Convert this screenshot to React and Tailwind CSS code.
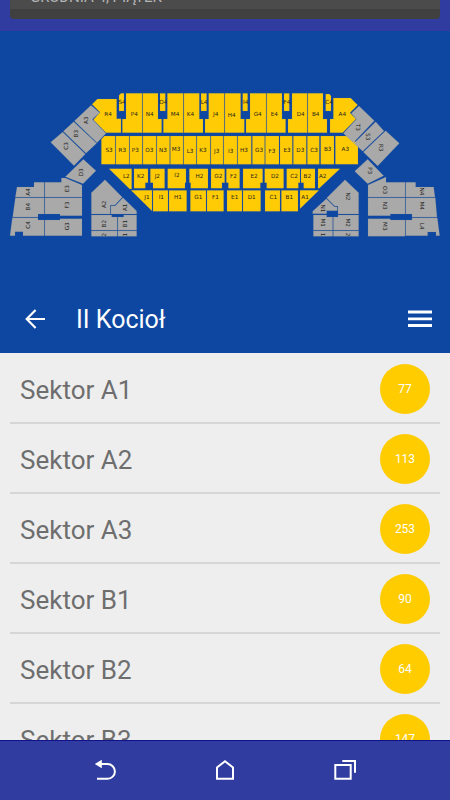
import React from 'react';

// Stand outlines, in map units. Each entry: label, label x, label y, outline
const yellowStands = [
  ['R4', 324, 102, '276,73 292,57 350,57 350,116 363,116 363,158 318,158 280,119 300,97'],
  ['S4', 366, 65, '357,46 363,40 372,40 372,93 357,93'],
  ['P4', 403, 102, '378,40 426,40 426,158 367,158 367,117 378,117'],
  ['N4', 449, 102, '428,40 474,40 474,117 485,117 485,158 428,158'],
  ['O4', 490, 65, '480,40 496,40 496,93 480,93'],
  ['M4', 525, 102, '502,40 550,40 550,158 490,158 490,117 502,117'],
  ['K4', 571, 102, '552,40 598,40 598,117 609,117 609,158 552,158'],
  ['L4', 612, 65, '603,40 620,40 620,93 603,93'],
  ['J4', 647, 102, '626,40 673,40 673,158 615,158 615,117 626,117'],
  ['H4', 695, 104, '675,40 722,40 722,117 733,117 733,158 675,158'],
  ['I4', 737, 66, '728,40 743,40 743,93 728,93'],
  ['G4', 773, 102, '750,40 798,40 798,158 738,158 738,117 750,117'],
  ['E4', 823, 102, '800,40 846,40 846,117 857,117 857,158 800,158'],
  ['F4', 861, 66, '852,40 868,40 868,93 852,93'],
  ['D4', 902, 102, '876,40 922,40 922,158 864,158 864,117 876,117'],
  ['B4', 947, 102, '924,40 969,40 969,117 981,117 981,158 924,158'],
  ['C4', 987, 65, '977,42 988,42 993,48 993,93 977,93'],
  ['A4', 1027, 101, '1000,54 1052,54 1073,75 1050,98 1068,117 1028,158 990,158 990,117 1000,117'],
  ['S3', 327, 210, '304,178 313,168 346,168 346,253 304,253'],
  ['R3', 367, 210, '348,168 387,168 387,253 348,253'],
  ['P3', 406, 210, '389,168 427,168 427,253 389,253'],
  ['O3', 448, 210, '429,168 469,168 469,253 429,253'],
  ['N3', 489, 210, '471,168 509,168 509,253 471,253'],
  ['M3', 528, 207, '511,168 549,168 549,253 511,253'],
  ['L3', 570, 212, '551,168 589,168 589,253 551,253'],
  ['K3', 609, 210, '591,168 631,168 631,253 591,253'],
  ['J3', 650, 212, '633,168 669,168 669,253 633,253'],
  ['I3', 692, 213, '671,168 711,168 711,253 671,253'],
  ['H3', 732, 210, '713,168 754,168 754,253 713,253'],
  ['G3', 777, 210, '757,168 794,168 794,253 757,253'],
  ['F3', 816, 212, '796,168 837,168 837,253 796,253'],
  ['E3', 861, 210, '840,168 877,168 877,253 840,253'],
  ['D3', 901, 210, '880,168 919,168 919,253 880,253'],
  ['C3', 942, 210, '922,168 958,168 958,253 922,253'],
  ['B3', 983, 208, '962,168 1002,168 1002,253 962,253'],
  ['A3', 1036, 208, '1006,168 1046,168 1074,193 1074,253 1006,253'],
  ['L2', 379, 287, '327,266 395,266 395,327 389,327'],
  ['K2', 422, 287, '402,266 444,266 444,308 436,308 436,325 402,325'],
  ['J2', 472, 287, '451,266 494,266 494,325 459,325 459,308 451,308'],
  ['I2', 531, 286, '503,266 558,266 558,308 555,308 555,325 503,325'],
  ['H2', 598, 288, '568,266 624,266 624,325 572,325 572,308 568,308'],
  ['G2', 655, 287, '633,266 674,266 674,308 666,308 666,325 633,325'],
  ['F2', 700, 287, '679,266 719,266 719,325 685,325 685,308 679,308'],
  ['E2', 762, 287, '729,266 788,266 788,308 781,308 781,325 729,325'],
  ['D2', 825, 287, '794,266 851,266 851,325 800,325 800,308 794,308'],
  ['C2', 882, 287, '860,266 900,266 900,308 895,308 895,325 860,325'],
  ['B2', 922, 287, '903,266 945,266 945,325 911,325 911,308 903,308'],
  ['A2', 968, 287, '954,266 1020,266 958,325 954,325'],
  ['J1', 441, 351, '393,331 456,331 456,393'],
  ['I1', 484, 350, '459,331 504,331 504,394 459,394'],
  ['H1', 534, 352, '507,331 560,331 560,394 507,394'],
  ['G1', 595, 352, '571,331 618,331 618,394 571,394'],
  ['F1', 646, 351, '621,331 671,331 671,394 621,394'],
  ['E1', 704, 352, '681,331 726,331 726,394 681,394'],
  ['D1', 755, 352, '729,331 782,331 782,394 729,394'],
  ['C1', 820, 352, '795,331 840,331 840,394 795,394'],
  ['B1', 868, 352, '844,331 894,331 894,394 844,394'],
  ['A1', 915, 352, '900,331 957,331 900,386'],
];

// Labels on the left side read upwards
const leftStands = [
  ['A3', 258, 121, '223,123 273,76 299,98 277,118 318,160 291,188'],
  ['B3', 228, 161, '190,154 221,125 290,190 258,220'],
  ['C3', 198, 198, '152,187 188,156 256,222 222,257'],
  ['D3', 242, 277, '250,238 288,272 249,311 196,290'],
  ['A4', 84, 336, '51,321 102,321 102,307 133,307 133,351 46,351'],
  ['E3', 201, 326, '135,307 184,307 184,294 196,294 246,315 246,351 135,351'],
  ['B4', 84, 380, '46,353 133,353 133,402 114,402 114,411 38,411'],
  ['F3', 201, 375, '135,353 246,353 246,407 180,407 180,402 135,402'],
  ['C4', 84, 435, '37,413 114,413 114,420 133,420 133,467 69,467 69,455 45,455 45,467 30,467'],
  ['G3', 201, 439, '135,420 180,420 180,416 246,416 246,467 135,467'],
  ['A2', 311, 373, '274,338 315,299 367,352 345,375 331,375 331,402 274,402'],
  ['A1', 375, 382, '369,353 410,393 410,402 333,402 333,377 346,377'],
  ['B2', 311, 431, '274,405 335,405 335,411 352,411 352,451 274,451'],
  ['B1', 375, 431, '354,411 371,411 371,405 410,405 410,451 354,451'],
  ['2', 311, 464, '274,453 352,453 352,469 274,469'],
  ['1', 375, 464, '354,453 410,453 410,469 354,469'],
];

// Labels on the right side read downwards
const rightStands = [
  ['T3', 1075, 142, '1077,78 1123,122 1060,188 1030,160 1069,118 1054,100'],
  ['S3', 1104, 170, '1127,125 1152,153 1088,214 1062,190'],
  ['R3', 1144, 203, '1157,152 1198,190 1133,258 1090,216'],
  ['P3', 1109, 272, '1103,238 1151,287 1103,311 1064,274'],
  ['O3', 1155, 330, '1104,315 1158,291 1158,307 1215,307 1215,351 1104,351'],
  ['N4', 1265, 334, '1217,307 1247,307 1247,321 1301,321 1305,351 1217,351'],
  ['N3', 1155, 377, '1104,353 1215,353 1215,402 1171,402 1171,407 1104,407'],
  ['M4', 1265, 377, '1217,353 1306,353 1311,411 1236,411 1236,402 1217,402'],
  ['M3', 1155, 439, '1104,416 1171,416 1171,420 1215,420 1215,469 1104,469'],
  ['L4', 1265, 439, '1217,420 1236,420 1236,413 1312,413 1319,467 1308,467 1308,456 1283,456 1283,467 1217,467'],
  ['N2', 1043, 349, '1035,299 1076,338 1076,402 1014,402 1014,378 1004,378 980,354'],
  ['N1', 968, 385, '979,356 1003,380 1012,380 1012,392 980,392 980,401 938,401 938,394'],
  ['M1', 968, 428, '940,405 980,405 980,411 998,411 998,451 940,451'],
  ['M2', 1043, 428, '1000,411 1014,411 1014,405 1076,405 1076,451 1000,451'],
  ['1', 968, 464, '940,453 998,453 998,469 940,469'],
  ['2', 1043, 464, '1000,453 1076,453 1076,469 1000,469'],
];

const sectors = [
  { name: 'Sektor A1', count: 77 },
  { name: 'Sektor A2', count: 113 },
  { name: 'Sektor A3', count: 253 },
  { name: 'Sektor B1', count: 90 },
  { name: 'Sektor B2', count: 64 },
  { name: 'Sektor B3', count: 147 },
];

const Stands = ({ stands, color, angle }) => (
  <g>
    {stands.map(([label, x, y, points]) => (
      <g key={points}>
        <polygon points={points} fill={color} stroke="#6f7f8f" strokeOpacity="0.5" strokeWidth="1" />
        <text
          x={x}
          y={y}
          transform={`rotate(${angle} ${x} ${y})`}
          textAnchor="middle"
          dominantBaseline="central"
          fill="#22221c"
        >
          {label}
        </text>
      </g>
    ))}
  </g>
);

const StadiumMap = () => (
  <svg
    viewBox="0 0 1350 495"
    className="w-full font-['DejaVu_Sans',sans-serif] text-[17px]"
    role="img"
    aria-label="Stadion"
  >
    <Stands stands={yellowStands} color="#ffcb05" angle={0} />
    <Stands stands={leftStands} color="#a9a9a9" angle={-90} />
    <Stands stands={rightStands} color="#a9a9a9" angle={90} />
  </svg>
);

const SectorRow = ({ name, count }) => (
  <li className="mx-[10px] flex h-[70px] shrink-0 items-center justify-between border-b-2 border-[#d6d6d6] px-[10px] pt-[2px]">
    <span className="pt-[2px] text-[26px] leading-8 text-[#6e6e6e]">{name}</span>
    <span className="flex size-[50px] items-center justify-center rounded-full bg-[#ffcc00] text-xs text-white">
      {count}
    </span>
  </li>
);

const NavBar = () => (
  <nav className="flex h-[60px] shrink-0 items-center justify-center gap-[88px] bg-[#303c9f] text-white shadow-[inset_0_1px_0_#10128a]">
    <button type="button" aria-label="Back">
      <svg viewBox="0 0 32 32" className="size-8" fill="none" stroke="currentColor" strokeWidth="2">
        <path d="M11 10h7.500a7.400 7.400 0 0 1 0 14.800H8" />
        <path d="M5.800 10l7-4.200v8.400z" fill="currentColor" stroke="none" />
      </svg>
    </button>
    <button type="button" aria-label="Home">
      <svg viewBox="0 0 32 32" className="size-8" fill="none" stroke="currentColor" strokeWidth="2">
        <path d="M8 24.800V13.500L16 7.200l8 6.300v11.300z" />
      </svg>
    </button>
    <button type="button" aria-label="Recent apps">
      <svg viewBox="0 0 32 32" className="size-8" fill="none" stroke="currentColor" strokeWidth="2">
        <path d="M6.300 11h15.400v13.800H6.300z" />
        <path d="M13.300 7H26v11.700" />
      </svg>
    </button>
  </nav>
);

const App = () => {
  return (
    <div className="flex h-screen flex-col overflow-hidden bg-[#eeeeee] font-[Roboto,sans-serif]">
      {/* Bottom edge of the match card */}
      <div className="h-[31px] shrink-0 bg-[#303c9f] px-[10px]">
        <div className="flex h-[19px] flex-col justify-end overflow-hidden rounded-b-sm border-b-[10px] border-[#404040] bg-[#4b4b4b] px-5">
          <p className="pb-[2px] text-[15px] leading-5 text-[#b5b5b5]">GRUDNIA 4, PIĄTEK</p>
        </div>
      </div>

      <section className="shrink-0 bg-[#0d47a1] pt-[49px]">
        <StadiumMap />
        <header className="flex items-center px-[18px] pt-14 pb-4">
          <button type="button" aria-label="Wstecz" className="flex h-9 w-[34px] items-center justify-center text-white">
            <svg viewBox="0 0 20 20" className="size-5" fill="none" stroke="currentColor" strokeWidth="2.200">
              <path d="M20 10H2M10.600 1L1.700 10l8.900 9" />
            </svg>
          </button>
          <h1 className="grow pt-[2px] pl-6 text-[25px] leading-[34px] text-white">II Kocioł</h1>
          <button type="button" aria-label="Menu" className="text-white">
            <svg viewBox="0 0 24 18" className="h-[18px] w-6" fill="currentColor">
              <path d="M0 .5h24v3H0zM0 7.500h24v2.800H0zM0 14h24v3H0z" />
            </svg>
          </button>
        </header>
      </section>

      <ul className="flex min-h-0 flex-1 flex-col overflow-hidden pt-px">
        {sectors.map((sector) => (
          <SectorRow key={sector.name} name={sector.name} count={sector.count} />
        ))}
      </ul>

      <NavBar />
    </div>
  );
};

export default App;
